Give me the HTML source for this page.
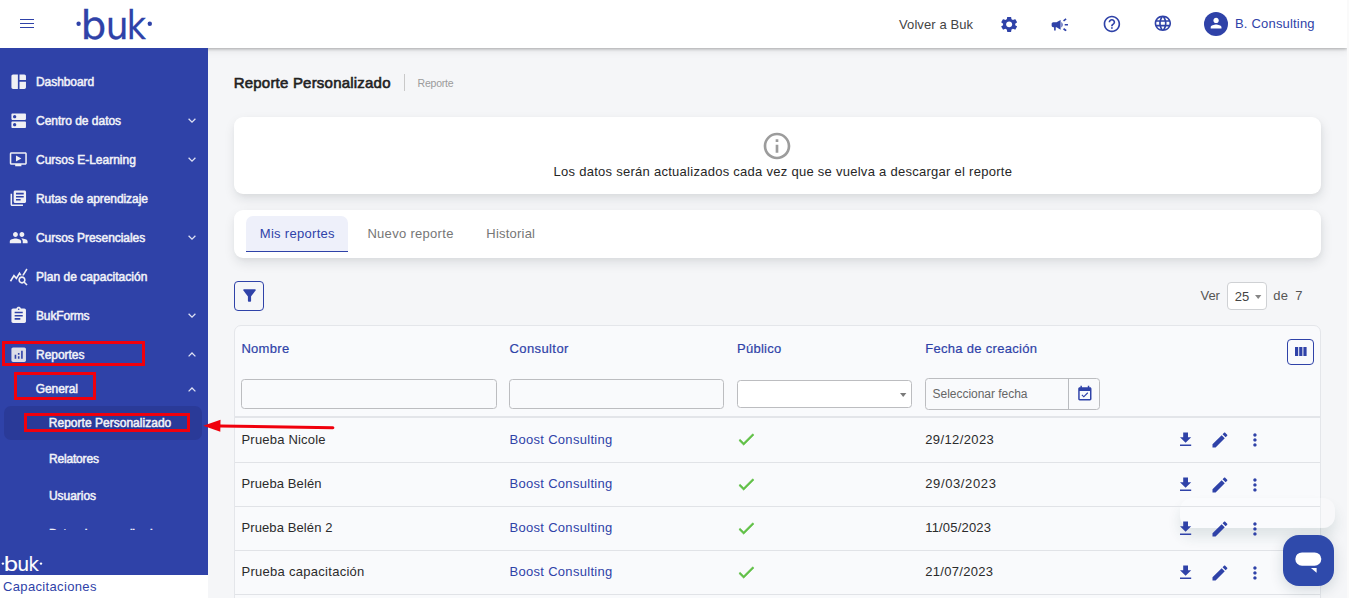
<!DOCTYPE html>
<html lang="es">
<head>
<meta charset="utf-8">
<title>Reporte Personalizado</title>
<style>
*{box-sizing:border-box;margin:0;padding:0}
html,body{width:1349px;height:598px;overflow:hidden}
body{position:relative;background:#f5f6f8;font-family:"Liberation Sans",sans-serif;font-size:13px;color:#2b2b2b}
.abs{position:absolute}
.t{position:absolute;white-space:nowrap;line-height:16px;font-size:13px;letter-spacing:.27px}
svg{display:block;position:absolute;overflow:visible}
.blue{color:#2f42a8}
.th{-webkit-text-stroke:.2px #2f42a8}
/* header */
#top{position:absolute;left:0;top:0;width:1347px;height:48px;background:#fff;box-shadow:0 1px 3px rgba(0,0,0,.28),0 3px 8px rgba(0,0,0,.07);z-index:5}
#strip{position:absolute;left:1347px;top:0;width:2px;height:598px;background:#fafafa;z-index:9}
/* sidebar */
#side{position:absolute;left:0;top:48px;width:208px;height:527px;background:#2f42a8;z-index:6;overflow:hidden}
#side .t{color:#f1f2f8;font-weight:400;font-size:12px;letter-spacing:-.03px;-webkit-text-stroke:.5px #f1f2f8}
#menu{position:absolute;left:0;top:0;width:208px;height:482px;overflow:hidden}
#cap{position:absolute;left:0;top:575px;width:208px;height:23px;background:#fff;z-index:6}
.redbox{position:absolute;border:3.2px solid #f0000c;z-index:6}
/* cards */
.card{position:absolute;background:#fff;border-radius:9px;box-shadow:1px 5px 12px rgba(20,25,35,.10),1px 2px 4px rgba(0,0,0,.035)}
#tbl{position:absolute;left:234px;top:325px;width:1087px;height:290px;background:#f9fafc;border:1px solid #e4e6ea;border-radius:7px}
.hline{position:absolute;left:235px;width:1085px;height:1px;background:#e1e3e7}
.inp{position:absolute;border:1px solid #bcbdc0;border-radius:3.5px}
</style>
</head>
<body>

<!-- ============ MAIN CONTENT ============ -->
<div id="main">
  <div class="t" style="left:233.7px;top:72.8px;font-size:15px;line-height:20px;font-weight:400;letter-spacing:.21px;color:#222;-webkit-text-stroke:.6px #222">Reporte Personalizado</div>
  <div class="abs" style="left:404px;top:74px;width:1px;height:17px;background:#c9c9c9"></div>
  <div class="t" style="left:417.5px;top:76.4px;font-size:10.5px;line-height:14px;letter-spacing:-.2px;color:#9b9b9b">Reporte</div>

  <!-- info card -->
  <div class="card" style="left:234px;top:117px;width:1087px;height:77px"></div>
  <svg style="left:761.4px;top:130px" width="32" height="32" viewBox="0 0 24 24"><path fill="#9c9c9c" d="M11 17h2v-6h-2v6zm1-15C6.48 2 2 6.48 2 12s4.48 10 10 10 10-4.48 10-10S17.52 2 12 2zm0 18c-4.41 0-8-3.59-8-8s3.590-8 8-8 8 3.590 8 8-3.590 8-8 8zM11 9h2V7h-2v2z"/></svg>
  <div class="t" style="left:553.5px;top:163.7px;color:#262626">Los datos serán actualizados cada vez que se vuelva a descargar el reporte</div>

  <!-- tabs card -->
  <div class="card" style="left:234px;top:210px;width:1087px;height:47.5px"></div>
  <div class="abs" style="left:246px;top:216px;width:102px;height:36px;background:#eef0fa;border-radius:7px 7px 0 0;border-bottom:1.4px solid #2f42a8"></div>
  <div class="t blue" style="left:259.8px;top:226.3px;letter-spacing:.3px">Mis reportes</div>
  <div class="t" style="left:367.4px;top:226.3px;letter-spacing:.3px;color:#767676">Nuevo reporte</div>
  <div class="t" style="left:486.3px;top:226.3px;letter-spacing:.22px;color:#767676">Historial</div>

  <!-- filter button -->
  <div class="abs" style="left:234px;top:281px;width:30px;height:30px;border:1px solid #2f42a8;border-radius:4px"></div>
  <svg style="left:239.5px;top:286px" width="19" height="19" viewBox="0 0 24 24"><path fill="#2f42a8" d="M4.25 5.61C6.27 8.2 10 13 10 13v6c0 .55.45 1 1 1h2c.55 0 1-.45 1-1v-6s3.720-4.800 5.740-7.390c.51-.66.040-1.610-.79-1.610H5.040c-.83 0-1.300.95-.79 1.610z"/></svg>

  <!-- pager -->
  <div class="t" style="left:1200.6px;top:287.6px;letter-spacing:-.15px;color:#555">Ver</div>
  <div class="abs" style="left:1227px;top:282px;width:40px;height:28px;background:#fff;border:1px solid #cfd1d4;border-radius:4px"></div>
  <div class="t" style="left:1234.7px;top:289.4px;letter-spacing:.15px;color:#444">25</div>
  <svg style="left:1254.8px;top:294.7px" width="6.400" height="4" viewBox="0 0 6.400 4"><path d="M0 0h6.400L3.200 4z" fill="#868686"/></svg>
  <div class="t" style="left:1273.3px;top:287.6px;color:#555">de</div>
  <div class="t" style="left:1295.2px;top:287.6px;color:#555">7</div>

  <!-- table -->
  <div id="tbl"></div>
  <div class="abs" style="left:1179.6px;top:498px;width:155.5px;height:30px;border-radius:12px;background:rgba(255,255,255,.28);box-shadow:0 9px 13px rgba(30,70,70,.12)"></div>
  <div class="t blue th" style="left:241.4px;top:341.4px;letter-spacing:.3px">Nombre</div>
  <div class="t blue th" style="left:509.5px;top:341.4px;letter-spacing:.4px">Consultor</div>
  <div class="t blue th" style="left:737px;top:341.4px;letter-spacing:.27px">Público</div>
  <div class="t blue th" style="left:925.2px;top:341.4px;letter-spacing:.3px">Fecha de creación</div>
  <div class="abs" style="left:1287px;top:339px;width:27px;height:26px;border:1px solid #2f42a8;border-radius:4px"></div>
  <svg style="left:1294.8px;top:347px" width="12" height="9" viewBox="0 0 12 9"><path fill="#2f42a8" d="M0 0h3.200v9H0zM4.200 0h3.200v9H4.200zM8.400 0h3.200v9H8.400z"/></svg>

  <div class="inp" style="left:241px;top:379px;width:256px;height:30px"></div>
  <div class="inp" style="left:509px;top:379px;width:215px;height:30px"></div>
  <div class="inp" style="left:737px;top:380.4px;width:175px;height:27.5px;background:#fff"></div>
  <svg style="left:899.8px;top:393.3px" width="6.400" height="4" viewBox="0 0 6.400 4"><path d="M0 0h6.400L3.200 4z" fill="#7a7a7a"/></svg>
  <div class="inp" style="left:925px;top:378px;width:175px;height:32px"></div>
  <div class="abs" style="left:1068px;top:378px;width:1px;height:32px;background:#b9bbbf"></div>
  <div class="t" style="left:932.6px;top:386.4px;font-size:12px;letter-spacing:-.03px;color:#666">Seleccionar fecha</div>
  <svg style="left:1075.7px;top:384.6px" width="17.7" height="17.7" viewBox="0 0 24 24"><path fill="#2f42a8" d="M16.53 11.06L15.47 10l-4.88 4.88-2.12-2.12-1.060 1.060L10.590 17l5.940-5.940zM19 3h-1V1h-2v2H8V1H6v2H5c-1.110 0-1.990.9-1.990 2L3 19c0 1.100.89 2 2 2h14c1.100 0 2-.9 2-2V5c0-1.100-.9-2-2-2zm0 16H5V8h14v11z"/></svg>


  <!-- rows -->
  <div class="t" style="left:241.5px;top:431.5px;letter-spacing:.2px;color:#2b2b2b">Prueba Nicole</div>
  <div class="t blue" style="left:509.5px;top:431.5px;letter-spacing:.3px">Boost Consulting</div>
  <svg style="left:735.8px;top:429.0px" width="20.500" height="20.500" viewBox="0 0 24 24"><path fill="#60c046" stroke="#60c046" stroke-width=".7" d="M9 16.17L4.83 12l-1.42 1.41L9 19 21 7l-1.41-1.41z"/></svg>
  <div class="t" style="left:925.2px;top:431.5px;letter-spacing:.4px;color:#2b2b2b">29/12/2023</div>
  <svg style="left:1175.8px;top:429.7px" width="19.200" height="19.200" viewBox="0 0 24 24"><path fill="#2f42a8" d="M19 9h-4V3H9v6H5l7 7 7-7zM5 18v2h14v-2H5z"/></svg>
  <svg style="left:1210.1px;top:429.5px" width="19.900" height="19.900" viewBox="0 0 24 24"><path fill="#2f42a8" d="M3 17.25V21h3.75L17.81 9.94l-3.75-3.75L3 17.25zM20.71 7.04c.39-.39.39-1.02 0-1.41l-2.34-2.34c-.39-.39-1.02-.39-1.41 0l-1.83 1.83 3.75 3.75 1.83-1.83z"/></svg>
  <svg style="left:1245.1px;top:429.5px" width="19.900" height="19.900" viewBox="0 0 24 24"><path fill="#2f42a8" d="M12 8c1.1 0 2-.9 2-2s-.9-2-2-2-2 .9-2 2 .9 2 2 2zm0 2c-1.1 0-2 .9-2 2s.9 2 2 2 2-.9 2-2-.9-2-2-2zm0 6c-1.1 0-2 .9-2 2s.9 2 2 2 2-.9 2-2-.9-2-2-2z"/></svg>
  <div class="t" style="left:241.5px;top:475.5px;letter-spacing:0.11px;color:#2b2b2b">Prueba Belén</div>
  <div class="t blue" style="left:509.5px;top:475.5px;letter-spacing:.3px">Boost Consulting</div>
  <svg style="left:735.8px;top:474.0px" width="20.500" height="20.500" viewBox="0 0 24 24"><path fill="#60c046" stroke="#60c046" stroke-width=".7" d="M9 16.17L4.83 12l-1.42 1.41L9 19 21 7l-1.41-1.41z"/></svg>
  <div class="t" style="left:925.2px;top:475.5px;letter-spacing:0.63px;color:#2b2b2b">29/03/2023</div>
  <svg style="left:1175.8px;top:474.7px" width="19.200" height="19.200" viewBox="0 0 24 24"><path fill="#2f42a8" d="M19 9h-4V3H9v6H5l7 7 7-7zM5 18v2h14v-2H5z"/></svg>
  <svg style="left:1210.1px;top:474.5px" width="19.900" height="19.900" viewBox="0 0 24 24"><path fill="#2f42a8" d="M3 17.25V21h3.75L17.81 9.94l-3.75-3.75L3 17.25zM20.71 7.04c.39-.39.39-1.02 0-1.41l-2.34-2.34c-.39-.39-1.02-.39-1.41 0l-1.83 1.83 3.75 3.75 1.83-1.83z"/></svg>
  <svg style="left:1245.1px;top:474.5px" width="19.900" height="19.900" viewBox="0 0 24 24"><path fill="#2f42a8" d="M12 8c1.1 0 2-.9 2-2s-.9-2-2-2-2 .9-2 2 .9 2 2 2zm0 2c-1.1 0-2 .9-2 2s.9 2 2 2 2-.9 2-2-.9-2-2-2zm0 6c-1.1 0-2 .9-2 2s.9 2 2 2 2-.9 2-2-.9-2-2-2z"/></svg>
  <div class="t" style="left:241.5px;top:519.5px;letter-spacing:0.1px;color:#2b2b2b">Prueba Belén 2</div>
  <div class="t blue" style="left:509.5px;top:519.5px;letter-spacing:.3px">Boost Consulting</div>
  <svg style="left:735.8px;top:518.0px" width="20.500" height="20.500" viewBox="0 0 24 24"><path fill="#60c046" stroke="#60c046" stroke-width=".7" d="M9 16.17L4.83 12l-1.42 1.41L9 19 21 7l-1.41-1.41z"/></svg>
  <div class="t" style="left:925.2px;top:519.5px;letter-spacing:0.19px;color:#2b2b2b">11/05/2023</div>
  <svg style="left:1175.8px;top:518.7px" width="19.200" height="19.200" viewBox="0 0 24 24"><path fill="#2f42a8" d="M19 9h-4V3H9v6H5l7 7 7-7zM5 18v2h14v-2H5z"/></svg>
  <svg style="left:1210.1px;top:518.5px" width="19.900" height="19.900" viewBox="0 0 24 24"><path fill="#2f42a8" d="M3 17.25V21h3.75L17.81 9.94l-3.75-3.75L3 17.25zM20.71 7.04c.39-.39.39-1.02 0-1.41l-2.34-2.34c-.39-.39-1.02-.39-1.41 0l-1.83 1.83 3.75 3.75 1.83-1.83z"/></svg>
  <svg style="left:1245.1px;top:518.5px" width="19.900" height="19.900" viewBox="0 0 24 24"><path fill="#2f42a8" d="M12 8c1.1 0 2-.9 2-2s-.9-2-2-2-2 .9-2 2 .9 2 2 2zm0 2c-1.1 0-2 .9-2 2s.9 2 2 2 2-.9 2-2-.9-2-2-2zm0 6c-1.1 0-2 .9-2 2s.9 2 2 2 2-.9 2-2-.9-2-2-2z"/></svg>
  <div class="t" style="left:241.5px;top:563.5px;letter-spacing:0.28px;color:#2b2b2b">Prueba capacitación</div>
  <div class="t blue" style="left:509.5px;top:563.5px;letter-spacing:.3px">Boost Consulting</div>
  <svg style="left:735.8px;top:562.0px" width="20.500" height="20.500" viewBox="0 0 24 24"><path fill="#60c046" stroke="#60c046" stroke-width=".7" d="M9 16.17L4.83 12l-1.42 1.41L9 19 21 7l-1.41-1.41z"/></svg>
  <div class="t" style="left:925.2px;top:563.5px;letter-spacing:0.31px;color:#2b2b2b">21/07/2023</div>
  <svg style="left:1175.8px;top:562.7px" width="19.200" height="19.200" viewBox="0 0 24 24"><path fill="#2f42a8" d="M19 9h-4V3H9v6H5l7 7 7-7zM5 18v2h14v-2H5z"/></svg>
  <svg style="left:1210.1px;top:562.5px" width="19.900" height="19.900" viewBox="0 0 24 24"><path fill="#2f42a8" d="M3 17.25V21h3.75L17.81 9.94l-3.75-3.75L3 17.25zM20.71 7.04c.39-.39.39-1.02 0-1.41l-2.34-2.34c-.39-.39-1.02-.39-1.41 0l-1.83 1.83 3.75 3.75 1.83-1.83z"/></svg>
  <svg style="left:1245.1px;top:562.5px" width="19.900" height="19.900" viewBox="0 0 24 24"><path fill="#2f42a8" d="M12 8c1.1 0 2-.9 2-2s-.9-2-2-2-2 .9-2 2 .9 2 2 2zm0 2c-1.1 0-2 .9-2 2s.9 2 2 2 2-.9 2-2-.9-2-2-2zm0 6c-1.1 0-2 .9-2 2s.9 2 2 2 2-.9 2-2-.9-2-2-2z"/></svg>
  <div class="hline" style="top:416px;height:2px;background:#e3e5e9"></div>
  <div class="hline" style="top:462px"></div>
  <div class="hline" style="top:506px"></div>
  <div class="hline" style="top:550px"></div>
  <div class="hline" style="top:594px"></div>
</div>



<!-- ============ CHAT WIDGET ============ -->
<div class="abs" style="left:1283px;top:535px;width:51px;height:51px;border-radius:16px;background:#2f4aab;box-shadow:0 4px 14px rgba(20,50,60,.16);z-index:3"></div>
<svg style="left:1283px;top:535px;z-index:3" width="51" height="51" viewBox="1283 535 51 51"><rect x="1295.300" y="552.400" width="26" height="13.400" rx="6.700" fill="#fff"/><path d="M1310.900 568h5.700v4.700z" fill="#fff"/></svg>

<!-- ============ TOP BAR ============ -->
<div id="top">
  <div class="abs" style="left:19.700px;top:19px;width:14.700px;height:1px;background:#2f42a8"></div>
  <div class="abs" style="left:19.700px;top:23px;width:14.700px;height:1px;background:#2f42a8"></div>
  <div class="abs" style="left:19.700px;top:27px;width:14.700px;height:1px;background:#2f42a8"></div>
  <svg style="left:70px;top:0" width="90" height="48" viewBox="0 0 90 48"><circle cx="8.600" cy="23.800" r="2.200" fill="#2f42a8"/><g font-family="'DejaVu Sans','Liberation Sans',sans-serif" font-size="39.800" fill="#2f42a8" stroke="#2f42a8" stroke-width=".25"><text transform="translate(10.400 39.100) scale(1.026 1)">b</text><text transform="translate(35.830 39.100) scale(.903 1)">u</text><text transform="translate(56.700 39.100) scale(.833 1)">k</text></g><circle cx="79.800" cy="23.800" r="2.200" fill="#2f42a8"/></svg>
  <div class="t" style="left:899px;top:17.300px;letter-spacing:.1px;color:#444">Volver a Buk</div>
  <svg style="left:998.800px;top:15px" width="20.300" height="18.800" viewBox="0 0 24 24" preserveAspectRatio="none"><path fill="#2f42a8" d="M19.14 12.94c.04-.3.06-.61.06-.94 0-.32-.02-.64-.07-.94l2.03-1.58c.18-.14.23-.41.12-.61l-1.92-3.32c-.12-.22-.37-.29-.59-.22l-2.39.96c-.5-.38-1.03-.7-1.62-.94l-.36-2.54c-.04-.24-.24-.41-.48-.41h-3.840c-.24 0-.43.17-.47.41l-.36 2.540c-.59.24-1.130.57-1.620.94l-2.390-.96c-.22-.08-.47 0-.59.22L2.740 8.870c-.12.21-.08.47.12.61l2.030 1.580c-.05.3-.09.63-.09.94s.02.64.07.94l-2.030 1.580c-.18.14-.23.41-.12.61l1.920 3.320c.12.22.37.29.59.22l2.390-.96c.5.38 1.030.7 1.620.94l.36 2.540c.05.24.24.41.48.41h3.840c.24 0 .44-.17.47-.41l.36-2.540c.59-.24 1.130-.56 1.620-.94l2.390.96c.22.08.47 0 .59-.22l1.920-3.320c.12-.22.07-.47-.12-.61l-2.010-1.580zM12 15.600c-1.980 0-3.600-1.620-3.600-3.600s1.620-3.600 3.600-3.600 3.600 1.620 3.600 3.600-1.620 3.600-3.600 3.600z"/></svg>
  <svg style="left:1050px;top:14.700px" width="19.600" height="19.600" viewBox="0 0 24 24"><path fill="#2f42a8" d="M18 11v2h4v-2h-4zm-2 6.61c.96.71 2.21 1.65 3.2 2.39.4-.53.8-1.07 1.2-1.6-.99-.74-2.24-1.68-3.2-2.4-.4.54-.8 1.08-1.2 1.61zM20.4 5.6c-.4-.53-.8-1.07-1.2-1.6-.99.74-2.24 1.68-3.2 2.4.4.53.8 1.07 1.2 1.6.96-.72 2.21-1.65 3.2-2.4zM4 9c-1.1 0-2 .9-2 2v2c0 1.100.9 2 2 2h1v4h2v-4h1l5 3V6L8 9H4zm11.500 3c0-1.330-.58-2.530-1.500-3.350v6.690c.92-.81 1.500-2.010 1.500-3.340z"/></svg>
  <svg style="left:1101.600px;top:14.200px" width="19.800" height="19.800" viewBox="0 0 24 24"><path fill="#2f42a8" d="M11 18h2v-2h-2v2zm1-16C6.48 2 2 6.48 2 12s4.48 10 10 10 10-4.48 10-10S17.52 2 12 2zm0 18c-4.41 0-8-3.590-8-8s3.590-8 8-8 8 3.590 8 8-3.590 8-8 8zm0-14c-2.210 0-4 1.790-4 4h2c0-1.100.9-2 2-2s2 .9 2 2c0 2-3 1.750-3 5h2c0-2.250 3-2.500 3-5 0-2.210-1.790-4-4-4z"/></svg>
  <svg style="left:1152.600px;top:14px" width="19.700" height="18.600" viewBox="0 0 24 24" preserveAspectRatio="none"><path fill="#2f42a8" d="M11.99 2C6.47 2 2 6.48 2 12s4.47 10 9.99 10C17.52 22 22 17.52 22 12S17.52 2 11.99 2zm6.93 6h-2.950c-.32-1.250-.78-2.450-1.380-3.560 1.840.63 3.370 1.910 4.330 3.560zM12 4.040c.83 1.200 1.480 2.530 1.910 3.960h-3.820c.43-1.430 1.080-2.760 1.910-3.960zM4.260 14C4.100 13.360 4 12.690 4 12s.1-1.360.26-2h3.380c-.08.66-.14 1.320-.14 2 0 .68.060 1.340.14 2H4.260zm.82 2h2.950c.32 1.250.78 2.450 1.380 3.560-1.840-.63-3.370-1.900-4.330-3.560zm2.950-8H5.080c.96-1.660 2.490-2.930 4.330-3.560C8.810 5.550 8.350 6.750 8.030 8zM12 19.960c-.83-1.200-1.480-2.530-1.910-3.960h3.820c-.43 1.430-1.080 2.760-1.910 3.960zM14.340 14H9.660c-.09-.66-.16-1.320-.16-2 0-.68.070-1.350.16-2h4.680c.09.65.16 1.320.16 2 0 .68-.070 1.340-.16 2zm.25 5.560c.6-1.110 1.060-2.310 1.380-3.560h2.950c-.96 1.650-2.490 2.930-4.330 3.560zM16.360 14c.080-.66.14-1.320.14-2 0-.68-.060-1.340-.14-2h3.380c.16.64.26 1.310.26 2s-.1 1.360-.26 2h-3.380z"/></svg>
  <div class="abs" style="left:1204px;top:12px;width:24px;height:24px;border-radius:50%;background:#2f42a8"></div>
  <svg style="left:1207.900px;top:15.400px" width="16.200" height="16.200" viewBox="0 0 24 24"><path fill="#fff" d="M12 12c2.21 0 4-1.79 4-4s-1.790-4-4-4-4 1.790-4 4 1.790 4 4 4zm0 2c-2.670 0-8 1.340-8 4v2h16v-2c0-2.660-5.330-4-8-4z"/></svg>
  <div class="t blue" style="left:1235px;top:16.300px;letter-spacing:.19px">B. Consulting</div>
</div>
<div id="strip"></div>


<!-- ============ SIDEBAR ============ -->
<div id="side">
 <div id="menu">
  <svg style="left:8.6px;top:23.8px" width="19.4" height="19.4" viewBox="0 0 24 24"><path fill="#f0f0f4" d="M11 21H5c-1.1 0-2-.9-2-2V5c0-1.1.9-2 2-2h6v18zm2 0h6c1.1 0 2-.9 2-2v-7h-8v9zm8-11V5c0-1.1-.9-2-2-2h-6v7h8z"/></svg>
  <div class="t" style="left:36px;top:25.9px;letter-spacing:-0.07px">Dashboard</div>
  <svg style="left:8.6px;top:62.7px" width="19.4" height="19.4" viewBox="0 0 24 24"><path fill="#f0f0f4" d="M20 13H4c-.55 0-1 .45-1 1v6c0 .55.45 1 1 1h16c.55 0 1-.45 1-1v-6c0-.55-.45-1-1-1zM7 19c-1.1 0-2-.9-2-2s.9-2 2-2 2 .9 2 2-.9 2-2 2zM20 3H4c-.55 0-1 .45-1 1v6c0 .55.45 1 1 1h16c.55 0 1-.45 1-1V4c0-.55-.45-1-1-1zM7 9c-1.1 0-2-.9-2-2s.9-2 2-2 2 .9 2 2-.9 2-2 2z"/></svg>
  <div class="t" style="left:36px;top:64.8px;letter-spacing:-0.02px">Centro de datos</div>
  <svg style="left:187.600px;top:70.2px" width="8" height="5" viewBox="0 0 8 5"><path d="M.6.8 4 4.200 7.400.8" fill="none" stroke="#dfe2f3" stroke-width="1.250"/></svg>
  <svg style="left:9.1px;top:101.9px" width="18.6" height="18.6" viewBox="0 0 24 24"><path fill="#f0f0f4" d="M21 3H3c-1.11 0-2 .89-2 2v12c0 1.1.89 2 2 2h5v2h8v-2h5c1.1 0 1.99-.9 1.99-2L23 5c0-1.11-.9-2-2-2zm0 14H3V5h18v12zm-5-6l-7 4V7z"/></svg>
  <div class="t" style="left:36px;top:103.8px;letter-spacing:-0.015px">Cursos E-Learning</div>
  <svg style="left:187.600px;top:109.2px" width="8" height="5" viewBox="0 0 8 5"><path d="M.6.8 4 4.200 7.400.8" fill="none" stroke="#dfe2f3" stroke-width="1.250"/></svg>
  <svg style="left:8.9px;top:141.2px" width="18.6" height="18.6" viewBox="0 0 24 24"><path fill="#f0f0f4" d="M4 6H2v14c0 1.1.9 2 2 2h14v-2H4V6zm16-4H8c-1.1 0-2 .9-2 2v12c0 1.1.9 2 2 2h12c1.1 0 2-.9 2-2V4c0-1.1-.9-2-2-2zm-1 9H9V9h10v2zm-4 4H9v-2h6v2zm4-8H9V5h10v2z"/></svg>
  <div class="t" style="left:36px;top:142.8px;letter-spacing:-0.08px">Rutas de aprendizaje</div>
  <svg style="left:8.6px;top:179.7px" width="19.4" height="19.4" viewBox="0 0 24 24"><path fill="#f0f0f4" d="M16 11c1.66 0 2.99-1.34 2.99-3S17.66 5 16 5c-1.66 0-3 1.34-3 3s1.340 3 3 3zm-8 0c1.660 0 2.990-1.340 2.990-3S9.660 5 8 5C6.340 5 5 6.340 5 8s1.340 3 3 3zm0 2c-2.330 0-7 1.170-7 3.500V19h14v-2.500c0-2.330-4.670-3.500-7-3.500zm8 0c-.29 0-.62.020-.97.050 1.160.84 1.970 1.970 1.970 3.450V19h6v-2.500c0-2.330-4.670-3.500-7-3.500z"/></svg>
  <div class="t" style="left:36px;top:181.8px;letter-spacing:-0.045px">Cursos Presenciales</div>
  <svg style="left:187.600px;top:187.2px" width="8" height="5" viewBox="0 0 8 5"><path d="M.6.8 4 4.200 7.400.8" fill="none" stroke="#dfe2f3" stroke-width="1.250"/></svg>
  <svg style="left:8.6px;top:218.7px" width="19.4" height="19.4" viewBox="0 0 24 24"><path fill="#f0f0f4" d="M19.88 18.47c.44-.7.7-1.51.7-2.39 0-2.49-2.010-4.500-4.500-4.500s-4.500 2.010-4.500 4.500 2.010 4.500 4.490 4.500c.88 0 1.700-.26 2.390-.7L21.580 23 23 21.580l-3.120-3.110zm-3.800.11c-1.380 0-2.500-1.120-2.500-2.500s1.120-2.500 2.500-2.500 2.500 1.120 2.500 2.500-1.120 2.500-2.500 2.500zm-.36-8.500c-.74.020-1.450.18-2.100.45l-.55-.83-3.800 6.180-3.010-3.520-3.630 5.810L1 17l5-8 3 3.500L13 6l2.720 4.080zm2.590.5c-.64-.28-1.330-.45-2.050-.49L21.380 2 23 3.180l-4.690 7.400z"/></svg>
  <div class="t" style="left:36px;top:220.8px;letter-spacing:0.03px">Plan de capacitación</div>
  <svg style="left:8.6px;top:257.7px" width="19.4" height="19.4" viewBox="0 0 24 24"><path fill="#f0f0f4" d="M19 3h-4.18C14.4 1.84 13.3 1 12 1c-1.3 0-2.4.84-2.820 2H5c-1.100 0-2 .9-2 2v14c0 1.100.9 2 2 2h14c1.100 0 2-.9 2-2V5c0-1.100-.9-2-2-2zm-7 0c.55 0 1 .45 1 1s-.45 1-1 1-1-.45-1-1 .45-1 1-1zm2 14H7v-2h7v2zm3-4H7v-2h10v2zm0-4H7V7h10v2z"/></svg>
  <div class="t" style="left:36px;top:259.8px;letter-spacing:-0.15px">BukForms</div>
  <svg style="left:187.600px;top:265.2px" width="8" height="5" viewBox="0 0 8 5"><path d="M.6.8 4 4.200 7.400.8" fill="none" stroke="#dfe2f3" stroke-width="1.250"/></svg>
  <svg style="left:8.6px;top:296.7px" width="19.4" height="19.4" viewBox="0 0 24 24"><path fill="#dcdde8" d="M19 3H5c-1.1 0-2 .9-2 2v14c0 1.1.9 2 2 2h14c1.1 0 2-.9 2-2V5c0-1.1-.9-2-2-2zM9 17H7v-5h2v5zm4 0h-2v-3h2v3zm0-5h-2v-2h2v2zm4 5h-2V7h2v10z"/></svg>
  <div class="t" style="left:36px;top:298.8px;letter-spacing:-0.025px">Reportes</div>
  <svg style="left:187.600px;top:304.2px" width="8" height="5" viewBox="0 0 8 5"><path d="M.6 4.400 4 1l3.400 3.400" fill="none" stroke="#dfe2f3" stroke-width="1.250"/></svg>
  <div class="t" style="left:35.800px;top:333.4px;letter-spacing:-0.1px">General</div>
  <svg style="left:187.600px;top:338.5px" width="8" height="5" viewBox="0 0 8 5"><path d="M.6 4.400 4 1l3.400 3.400" fill="none" stroke="#dfe2f3" stroke-width="1.250"/></svg>
  <div class="abs" style="left:4px;top:358.4px;width:198px;height:33.600px;border-radius:7px;background:#2a3a98"></div>
  <div class="t" style="left:48.800px;top:366.9px;letter-spacing:.02px">Reporte Personalizado</div>
  <div class="t" style="left:49px;top:403.2px;letter-spacing:-0.18px">Relatores</div>
  <div class="t" style="left:49px;top:439.8px;letter-spacing:-0.045px">Usuarios</div>
  <div class="t" style="left:49px;top:478.4px;letter-spacing:-.5px">Datos desnormalizados</div>
 </div>
 <svg style="left:0;top:500px" width="48" height="27" viewBox="0 0 48 27"><circle cx="2.900" cy="15.600" r="1.200" fill="#fff"/><g font-family="'DejaVu Sans','Liberation Sans',sans-serif" font-size="19.900" fill="#fff" stroke="#fff" stroke-width=".15"><text transform="translate(3.520 23) scale(1.163 1)">b</text><text transform="translate(17.360 23) scale(.955 1)">u</text><text transform="translate(28.530 23) scale(.894 1)">k</text></g><circle cx="41" cy="15.600" r="1.200" fill="#fff"/></svg>
</div>
<div id="cap"><div class="t blue" style="left:3px;top:4.200px;letter-spacing:.35px">Capacitaciones</div></div>
<!-- red annotation marks -->
<div class="redbox" style="left:2.4px;top:341.3px;width:142.3px;height:25.0px"></div>
<div class="redbox" style="left:14.1px;top:372.4px;width:81.6px;height:27.7px"></div>
<div class="redbox" style="left:24.2px;top:412.6px;width:165.4px;height:19.9px"></div>
<svg style="left:200px;top:415px;z-index:7" width="140" height="22" viewBox="200 415 140 22"><path d="M220 426 L332.900 427.700" stroke="#f0000c" stroke-width="3" stroke-linecap="round" fill="none"/><path d="M203.300 425.800 L220.500 419.800 L220.300 431.700z" fill="#f0000c"/></svg>

</body>
</html>
